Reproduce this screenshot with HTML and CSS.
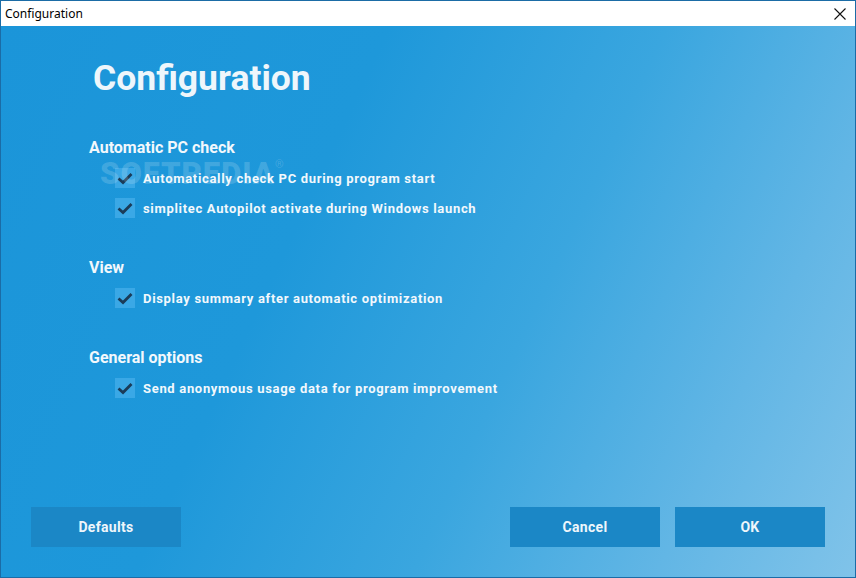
FILE: index.html
```html
<!DOCTYPE html>
<html>
<head>
<meta charset="utf-8">
<link rel="stylesheet" href="styles.css">
</head>
<body>
<div class="window">
  <div class="titlebar">
    <span class="title">Configuration</span>
    <span class="close"><svg width="12" height="12" viewBox="0 0 12 12"><path d="M0.5 0.5 L11.5 11.5 M11.5 0.5 L0.5 11.5" stroke="#111" stroke-width="1.1" fill="none"/></svg></span>
  </div>
  <div class="content">
    <h1 class="heading">Configuration</h1>
    <div class="watermark">SOFTPEDIA<sup>®</sup></div>
    <section class="group">
      <h2 class="group-title">Automatic PC check</h2>
      <label class="option"><span class="box"><svg width="20" height="20" viewBox="0 0 20 20"><path d="M3.5 10.5 L8 14.5 L16.5 6" stroke="#1b3b58" stroke-width="2.8" fill="none"/></svg></span>Automatically check PC during program start</label>
      <label class="option"><span class="box"><svg width="20" height="20" viewBox="0 0 20 20"><path d="M3.5 10.5 L8 14.5 L16.5 6" stroke="#1b3b58" stroke-width="2.8" fill="none"/></svg></span>simplitec Autopilot activate during Windows launch</label>
    </section>
    <section class="group">
      <h2 class="group-title">View</h2>
      <label class="option"><span class="box"><svg width="20" height="20" viewBox="0 0 20 20"><path d="M3.5 10.5 L8 14.5 L16.5 6" stroke="#1b3b58" stroke-width="2.8" fill="none"/></svg></span>Display summary after automatic optimization</label>
    </section>
    <section class="group">
      <h2 class="group-title">General options</h2>
      <label class="option"><span class="box"><svg width="20" height="20" viewBox="0 0 20 20"><path d="M3.5 10.5 L8 14.5 L16.5 6" stroke="#1b3b58" stroke-width="2.8" fill="none"/></svg></span>Send anonymous usage data for program improvement</label>
    </section>
    <div class="buttons">
      <button class="btn">Defaults</button>
      <div class="right">
        <button class="btn">Cancel</button>
        <button class="btn">OK</button>
      </div>
    </div>
  </div>
</div>
</body>
</html>
```
FILE: styles.css
```css
html, body {
  margin: 0;
  padding: 0;
  width: 856px;
  height: 578px;
  overflow: hidden;
}
.window {
  width: 856px;
  height: 578px;
  box-sizing: border-box;
  border: 1px solid #1b6ca6;
  display: flex;
  flex-direction: column;
}
.titlebar {
  height: 25px;
  background: #fff;
  display: flex;
  align-items: center;
  justify-content: space-between;
  padding-left: 4px;
  padding-right: 9px;
  flex: none;
}
.title {
  font-family: "Segoe UI", "Noto Sans", sans-serif;
  font-size: 12px;
  color: #000;
}
.close {
  display: flex;
  align-items: center;
}
.content {
  flex: 1;
  position: relative;
  background: linear-gradient(115deg, #1b95d9 0%, #1e98da 35%, #3aa6df 60%, #62b6e5 82%, #80c3e9 100%);
  display: flex;
  flex-direction: column;
  padding: 0 30px 30px 30px;
  font-family: Roboto, "Liberation Sans", sans-serif;
  color: #f2f8fc;
}
.heading {
  margin: 32px 0 0 62px;
  font-size: 35.5px;
  line-height: 40px;
  font-weight: 700;
  color: #eef6fb;
}
.watermark {
  position: absolute;
  left: 99px;
  top: 129px;
  font-family: Roboto, "Liberation Sans", sans-serif;
  font-weight: 900;
  font-size: 31px;
  letter-spacing: 1px;
  color: rgba(255, 255, 255, 0.17);
  pointer-events: none;
}
.watermark sup {
  font-size: 11px;
  font-weight: 400;
  vertical-align: 16px;
}
.group {
  margin: 0 0 0 58px;
  display: flex;
  flex-direction: column;
  gap: 10px;
}
.heading + .watermark + .group {
  margin-top: 40px;
}
.group + .group {
  margin-top: 40px;
}
.group-title {
  margin: 0;
  font-size: 16px;
  line-height: 20px;
  font-weight: 700;
  color: #f2f8fc;
}
.option {
  display: flex;
  align-items: center;
  gap: 8px;
  margin-left: 26px;
  height: 20px;
  font-size: 13px;
  font-weight: 700;
  letter-spacing: 0.68px;
  color: #f2f8fc;
}
.box {
  width: 20px;
  height: 20px;
  background: #3aa8e6;
  display: flex;
  flex: none;
}
.buttons {
  margin-top: auto;
  display: flex;
  justify-content: space-between;
}
.right {
  display: flex;
  gap: 15px;
}
.btn {
  width: 150px;
  height: 40px;
  border: none;
  background: #1b87c6;
  color: #eef6fb;
  font-family: Roboto, "Liberation Sans", sans-serif;
  font-size: 14px;
  font-weight: 700;
  letter-spacing: 0.3px;
  padding: 0;
}
```
